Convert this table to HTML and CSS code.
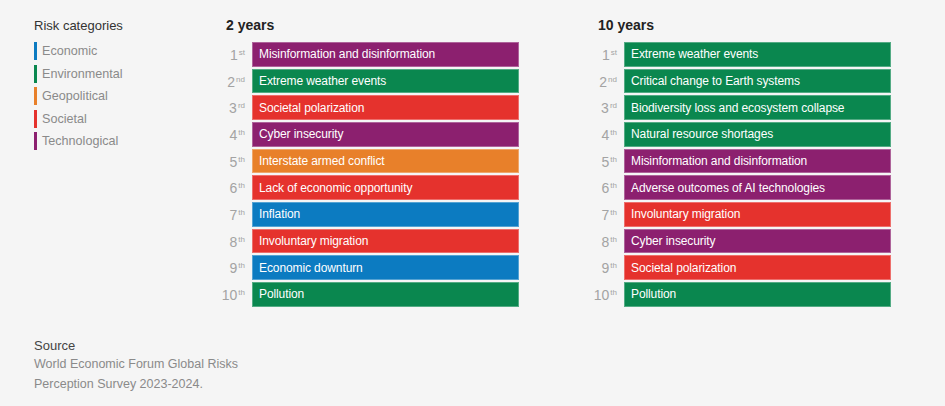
FILE: index.html
```html
<!DOCTYPE html>
<html lang="en">
<head>
<meta charset="utf-8">
<title>Global risks ranked by severity</title>
<link rel="stylesheet" href="styles.css">
</head>
<body>
<div class="page">
  <div class="top">
    <div class="legend">
      <div class="legend-title">Risk categories</div>
      <ul class="legend-list">
        <li class="legend-item"><span class="swatch economic"></span>Economic</li>
        <li class="legend-item"><span class="swatch environmental"></span>Environmental</li>
        <li class="legend-item"><span class="swatch geopolitical"></span>Geopolitical</li>
        <li class="legend-item"><span class="swatch societal"></span>Societal</li>
        <li class="legend-item"><span class="swatch technological"></span>Technological</li>
      </ul>
    </div>

    <div class="col">
      <h2 class="col-title">2 years</h2>
      <ol class="ranks">
        <li class="row"><span class="rank">1<sup>st</sup></span><span class="bar technological">Misinformation and disinformation</span></li>
        <li class="row"><span class="rank">2<sup>nd</sup></span><span class="bar environmental">Extreme weather events</span></li>
        <li class="row"><span class="rank">3<sup>rd</sup></span><span class="bar societal">Societal polarization</span></li>
        <li class="row"><span class="rank">4<sup>th</sup></span><span class="bar technological">Cyber insecurity</span></li>
        <li class="row"><span class="rank">5<sup>th</sup></span><span class="bar geopolitical">Interstate armed conflict</span></li>
        <li class="row"><span class="rank">6<sup>th</sup></span><span class="bar societal">Lack of economic opportunity</span></li>
        <li class="row"><span class="rank">7<sup>th</sup></span><span class="bar economic">Inflation</span></li>
        <li class="row"><span class="rank">8<sup>th</sup></span><span class="bar societal">Involuntary migration</span></li>
        <li class="row"><span class="rank">9<sup>th</sup></span><span class="bar economic">Economic downturn</span></li>
        <li class="row"><span class="rank">10<sup>th</sup></span><span class="bar environmental">Pollution</span></li>
      </ol>
    </div>

    <div class="col">
      <h2 class="col-title">10 years</h2>
      <ol class="ranks">
        <li class="row"><span class="rank">1<sup>st</sup></span><span class="bar environmental">Extreme weather events</span></li>
        <li class="row"><span class="rank">2<sup>nd</sup></span><span class="bar environmental">Critical change to Earth systems</span></li>
        <li class="row"><span class="rank">3<sup>rd</sup></span><span class="bar environmental">Biodiversity loss and ecosystem collapse</span></li>
        <li class="row"><span class="rank">4<sup>th</sup></span><span class="bar environmental">Natural resource shortages</span></li>
        <li class="row"><span class="rank">5<sup>th</sup></span><span class="bar technological">Misinformation and disinformation</span></li>
        <li class="row"><span class="rank">6<sup>th</sup></span><span class="bar technological">Adverse outcomes of AI technologies</span></li>
        <li class="row"><span class="rank">7<sup>th</sup></span><span class="bar societal">Involuntary migration</span></li>
        <li class="row"><span class="rank">8<sup>th</sup></span><span class="bar technological">Cyber insecurity</span></li>
        <li class="row"><span class="rank">9<sup>th</sup></span><span class="bar societal">Societal polarization</span></li>
        <li class="row"><span class="rank">10<sup>th</sup></span><span class="bar environmental">Pollution</span></li>
      </ol>
    </div>
  </div>

  <div class="source">
    <div class="source-title">Source</div>
    <p class="source-text">World Economic Forum Global Risks<br>Perception Survey 2023-2024.</p>
  </div>
</div>
</body>
</html>
```

FILE: styles.css
```css
* { box-sizing: border-box; }

html, body {
  margin: 0;
  padding: 0;
  background: #f5f5f5;
}

body {
  font-family: "Liberation Sans", Arial, sans-serif;
  color: #333;
}

.page {
  padding: 17px 0 0 34px;
  width: 945px;
  height: 406px;
}

.top {
  display: flex;
  align-items: flex-start;
}

.legend {
  width: 186px;
  flex: none;
}

.legend-title {
  font-size: 13px;
  line-height: 18px;
  color: #333;
}

.legend-list {
  list-style: none;
  margin: 7px 0 0;
  padding: 0;
  display: flex;
  flex-direction: column;
  gap: 4.6px;
}

.legend-item {
  display: flex;
  align-items: center;
  gap: 5px;
  font-size: 12.6px;
  line-height: 18px;
  color: #8a8a8a;
}

.swatch {
  width: 3px;
  height: 18px;
  flex: none;
}

.col {
  width: 299px;
  flex: none;
}

.col + .col {
  margin-left: 73px;
}

.col-title {
  margin: -1px 0 8px 6px;
  font-size: 14px;
  line-height: 18px;
  font-weight: bold;
  color: #222;
}

.ranks {
  list-style: none;
  margin: 0;
  padding: 0;
  display: grid;
  grid-auto-rows: 24.67px;
  row-gap: 2px;
}

.row {
  display: flex;
  align-items: stretch;
}

.rank {
  width: 32px;
  flex: none;
  padding-right: 7px;
  text-align: right;
  font-size: 14px;
  line-height: 26px;
  color: #a3a3a3;
  white-space: nowrap;
}

.rank sup {
  font-size: 8px;
  vertical-align: 5px;
  line-height: 0;
  margin-left: 1px;
}

.bar {
  flex: 1;
  display: flex;
  align-items: center;
  padding-left: 7px;
  font-size: 12px;
  letter-spacing: -0.1px;
  color: #fff;
  box-shadow: inset 0 0 0 1px rgba(255, 255, 255, 0.3);
}

.economic { background: #0c7bc1; }
.environmental { background: #0a874f; }
.geopolitical { background: #e8802a; }
.societal { background: #e5322d; }
.technological { background: #8c206f; }

.source {
  margin-top: 29px;
}

.source-title {
  font-size: 13px;
  line-height: 19.5px;
  color: #444;
}

.source-text {
  margin: 0;
  font-size: 12.5px;
  line-height: 19.5px;
  color: #8a8a8a;
}
```
